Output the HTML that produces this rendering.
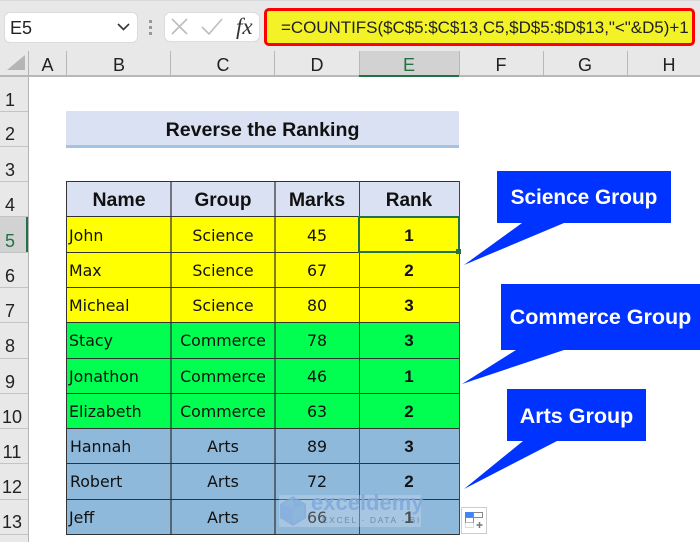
<!DOCTYPE html>
<html><head><meta charset="utf-8"><style>
html,body{margin:0;padding:0;background:#fff}
#p{position:relative;width:700px;height:542px;overflow:hidden;background:#fff;font-family:"DejaVu Sans","Liberation Sans",sans-serif;color:#111}
.a{position:absolute}
.t{position:absolute;white-space:nowrap;text-align:center;line-height:20px}
.h{font-size:18px;color:#222;font-family:"Liberation Sans",sans-serif}
.r{font-size:18px;color:#222;font-family:"Liberation Sans",sans-serif;left:0;width:24px}
.c{font-family:"DejaVu Sans",sans-serif;font-size:15.8px;color:#111}
.k{font-family:"Liberation Sans",sans-serif;font-weight:bold;font-size:17px;color:#111}
.hd{font-family:"Liberation Sans",sans-serif;font-weight:bold;font-size:19px;color:#111}
.co{font-family:"Liberation Sans",sans-serif;font-weight:bold;font-size:21.5px;color:#fff}
</style></head><body><div id="p">
<div class="a" style="left:0;top:0;width:700px;height:77px;background:#e8e8e8"></div>
<div class="a" style="left:0;top:0;width:700px;height:1px;background:#d8d8d8"></div>
<div class="a" style="left:0;top:77px;width:28px;height:465px;background:#e8e8e8"></div>
<div class="a" style="left:4px;top:12px;width:132px;height:29px;background:#fff;border:1px solid #dcdcdc;border-radius:6px"></div>
<div class="t" style="left:10px;top:18px;font-family:'Liberation Sans',sans-serif;font-size:18px;color:#222">E5</div>
<svg class="a" style="left:0;top:0" width="270" height="77">
<path d="M118 24l5.500 5.500 5.500-5.500" fill="none" stroke="#333" stroke-width="1.600"/>
<rect x="149" y="20" width="3" height="3" fill="#999"/><rect x="149" y="26" width="3" height="3" fill="#999"/><rect x="149" y="32" width="3" height="3" fill="#999"/>
<rect x="164.500" y="12.500" width="95" height="29" rx="6" fill="#fff" stroke="#dcdcdc"/>
<path d="M172 19l15 15M187 19l-15 15" stroke="#bdbdbd" stroke-width="1.600" fill="none"/>
<path d="M202 27l7 7 13-15" stroke="#bdbdbd" stroke-width="1.600" fill="none"/>
<path d="M7 70L25 55V70Z" fill="#b5b5b5"/>
</svg>
<div class="t" style="left:236px;top:17px;font-family:'Liberation Serif',serif;font-style:italic;font-size:23px;color:#333">fx</div>
<div class="a" style="left:264px;top:8px;width:431px;height:38px;background:#f2f226;border:3px solid #f00;border-radius:5px;box-sizing:border-box"></div>
<div class="t" style="left:281px;top:18px;font-family:'Liberation Sans',sans-serif;font-size:17px;color:#222;letter-spacing:-.04px">=COUNTIFS($C$5:$C$13,C5,$D$5:$D$13,"&lt;"&amp;D5)+1</div>

<!-- column headers -->
<div class="a" style="left:0;top:75px;width:700px;height:2px;background:#b8b8b8"></div>
<div class="a" style="left:359px;top:51px;width:100px;height:24px;background:#d2d2d2"></div>
<div class="a" style="left:359px;top:75px;width:100px;height:2px;background:#217346"></div>
<div class="a" style="left:28px;top:51px;width:1px;height:491px;background:#b4b4b4"></div>
<div class="a" style="left:66px;top:51px;width:1px;height:24px;background:#b8b8b8"></div>
<div class="a" style="left:170px;top:51px;width:1px;height:24px;background:#b8b8b8"></div>
<div class="a" style="left:274px;top:51px;width:1px;height:24px;background:#b8b8b8"></div>
<div class="a" style="left:359px;top:51px;width:1px;height:24px;background:#b8b8b8"></div>
<div class="a" style="left:459px;top:51px;width:1px;height:24px;background:#b8b8b8"></div>
<div class="a" style="left:543px;top:51px;width:1px;height:24px;background:#b8b8b8"></div>
<div class="a" style="left:627px;top:51px;width:1px;height:24px;background:#b8b8b8"></div>
<div class="t h" style="left:28px;width:39px;top:55px">A</div>
<div class="t h" style="left:67px;width:104px;top:55px">B</div>
<div class="t h" style="left:171px;width:104px;top:55px">C</div>
<div class="t h" style="left:275px;width:84px;top:55px">D</div>
<div class="t h" style="left:359px;width:100px;top:55px;color:#217346">E</div>
<div class="t h" style="left:459px;width:84px;top:55px">F</div>
<div class="t h" style="left:543px;width:84px;top:55px">G</div>
<div class="t h" style="left:627px;width:84px;top:55px">H</div>

<!-- row headers -->
<div class="a" style="left:0;top:216px;width:28px;height:36px;background:#d2d2d2"></div>
<div class="a" style="left:26px;top:216px;width:2px;height:36px;background:#217346"></div>
<div class="a" style="left:0;top:111px;width:28px;height:1px;background:#c4c4c4"></div>
<div class="a" style="left:0;top:146px;width:28px;height:1px;background:#c4c4c4"></div>
<div class="a" style="left:0;top:181px;width:28px;height:1px;background:#c4c4c4"></div>
<div class="a" style="left:0;top:216px;width:28px;height:1px;background:#c4c4c4"></div>
<div class="a" style="left:0;top:252px;width:28px;height:1px;background:#c4c4c4"></div>
<div class="a" style="left:0;top:287px;width:28px;height:1px;background:#c4c4c4"></div>
<div class="a" style="left:0;top:322px;width:28px;height:1px;background:#c4c4c4"></div>
<div class="a" style="left:0;top:358px;width:28px;height:1px;background:#c4c4c4"></div>
<div class="a" style="left:0;top:393px;width:28px;height:1px;background:#c4c4c4"></div>
<div class="a" style="left:0;top:428px;width:28px;height:1px;background:#c4c4c4"></div>
<div class="a" style="left:0;top:463px;width:28px;height:1px;background:#c4c4c4"></div>
<div class="a" style="left:0;top:499px;width:28px;height:1px;background:#c4c4c4"></div>
<div class="a" style="left:0;top:534px;width:28px;height:1px;background:#c4c4c4"></div>
<div class="t r" style="top:90px;left:-2px">1</div>
<div class="t r" style="top:124px;left:-2px">2</div>
<div class="t r" style="top:160px;left:-2px">3</div>
<div class="t r" style="top:195px;left:-2px">4</div>
<div class="t r" style="top:231px;left:-2px;color:#217346">5</div>
<div class="t r" style="top:266px;left:-2px">6</div>
<div class="t r" style="top:301px;left:-2px">7</div>
<div class="t r" style="top:336px;left:-2px">8</div>
<div class="t r" style="top:372px;left:-2px">9</div>
<div class="t r" style="top:407px">10</div>
<div class="t r" style="top:442px">11</div>
<div class="t r" style="top:477px">12</div>
<div class="t r" style="top:512px">13</div>

<!-- title -->
<div class="a" style="left:66px;top:111px;width:393px;height:34px;background:#d9e1f2"></div>
<div class="a" style="left:66px;top:145px;width:393px;height:3px;background:#a4c3e2"></div>
<div class="t hd" style="left:66px;width:393px;top:120px;font-size:19.600px">Reverse the Ranking</div>

<!-- table fills -->
<div class="a" style="left:67px;top:182px;width:392px;height:35px;background:#d9e1f2"></div>
<div class="a" style="left:67px;top:217px;width:392px;height:105px;background:#ff0"></div>
<div class="a" style="left:67px;top:322px;width:393px;height:106px;background:#00ff50"></div>
<div class="a" style="left:67px;top:428px;width:392px;height:106px;background:#8fb9da"></div>
<!-- horizontal lines -->
<div class="a" style="left:66px;top:181px;width:394px;height:1px;background:#333"></div>
<div class="a" style="left:66px;top:216px;width:394px;height:1px;background:#333"></div>
<div class="a" style="left:66px;top:252px;width:394px;height:1px;background:#333"></div>
<div class="a" style="left:66px;top:287px;width:394px;height:1px;background:#333"></div>
<div class="a" style="left:66px;top:322px;width:394px;height:1px;background:#333"></div>
<div class="a" style="left:66px;top:358px;width:394px;height:1px;background:#333"></div>
<div class="a" style="left:66px;top:393px;width:394px;height:1px;background:#333"></div>
<div class="a" style="left:66px;top:428px;width:394px;height:1px;background:#333"></div>
<div class="a" style="left:66px;top:463px;width:394px;height:1px;background:#333"></div>
<div class="a" style="left:66px;top:499px;width:394px;height:1px;background:#333"></div>
<div class="a" style="left:66px;top:534px;width:394px;height:1px;background:#333"></div>
<!-- vertical lines -->
<div class="a" style="left:66px;top:181px;width:1px;height:354px;background:#333"></div>
<div class="a" style="left:170px;top:181px;width:2px;height:354px;background:rgba(50,50,50,.62)"></div>
<div class="a" style="left:274px;top:181px;width:2px;height:354px;background:rgba(50,50,50,.62)"></div>
<div class="a" style="left:359px;top:181px;width:1px;height:354px;background:#444"></div>
<div class="a" style="left:459px;top:181px;width:1px;height:354px;background:#444"></div>
<!-- headers -->
<div class="t hd" style="left:67px;width:104px;top:190px;font-size:19.500px">Name</div>
<div class="t hd" style="left:171px;width:104px;top:191px">Group</div>
<div class="t hd" style="left:275px;width:84px;top:190px;font-size:19.500px">Marks</div>
<div class="t hd" style="left:359px;width:100px;top:191px">Rank</div>
<!-- names -->
<div class="t c" style="left:69px;top:226px">John</div>
<div class="t c" style="left:69px;top:261px">Max</div>
<div class="t c" style="left:69px;top:296px">Micheal</div>
<div class="t c" style="left:69px;top:331px">Stacy</div>
<div class="t c" style="left:69px;top:367px">Jonathon</div>
<div class="t c" style="left:69px;top:402px">Elizabeth</div>
<div class="t c" style="left:70px;top:437px">Hannah</div>
<div class="t c" style="left:70px;top:472px">Robert</div>
<div class="t c" style="left:69px;top:508px">Jeff</div>
<!-- groups -->
<div class="t c" style="left:171px;width:104px;top:226px">Science</div>
<div class="t c" style="left:171px;width:104px;top:261px">Science</div>
<div class="t c" style="left:171px;width:104px;top:296px">Science</div>
<div class="t c" style="left:171px;width:104px;top:331px">Commerce</div>
<div class="t c" style="left:171px;width:104px;top:367px">Commerce</div>
<div class="t c" style="left:171px;width:104px;top:402px">Commerce</div>
<div class="t c" style="left:171px;width:104px;top:437px">Arts</div>
<div class="t c" style="left:171px;width:104px;top:472px">Arts</div>
<div class="t c" style="left:171px;width:104px;top:508px">Arts</div>
<!-- marks -->
<div class="t c" style="left:275px;width:84px;top:226px">45</div>
<div class="t c" style="left:275px;width:84px;top:261px">67</div>
<div class="t c" style="left:275px;width:84px;top:296px">80</div>
<div class="t c" style="left:275px;width:84px;top:331px">78</div>
<div class="t c" style="left:275px;width:84px;top:367px">46</div>
<div class="t c" style="left:275px;width:84px;top:402px">63</div>
<div class="t c" style="left:275px;width:84px;top:437px">89</div>
<div class="t c" style="left:275px;width:84px;top:472px">72</div>
<div class="t c" style="left:275px;width:84px;top:508px">66</div>
<!-- ranks -->
<div class="t k" style="left:359px;width:100px;top:226px">1</div>
<div class="t k" style="left:359px;width:100px;top:261px">2</div>
<div class="t k" style="left:359px;width:100px;top:296px">3</div>
<div class="t k" style="left:359px;width:100px;top:331px">3</div>
<div class="t k" style="left:359px;width:100px;top:367px">1</div>
<div class="t k" style="left:359px;width:100px;top:402px">2</div>
<div class="t k" style="left:359px;width:100px;top:437px">3</div>
<div class="t k" style="left:359px;width:100px;top:472px">2</div>
<div class="t k" style="left:359px;width:100px;top:508px">1</div>
<!-- selection -->
<div class="a" style="left:358px;top:216px;width:102px;height:37px;border:2px solid #217346;box-sizing:border-box"></div>
<div class="a" style="left:456px;top:249px;width:5px;height:5px;background:#217346"></div>

<!-- watermark -->
<div class="a" style="left:279px;top:495px;width:142px;height:32px;background:rgba(225,235,245,.28)"></div>
<svg class="a" style="left:279px;top:495px" width="40" height="32"><path d="M14 1L27 9V23L14 31L1 23V9Z" fill="#7fa8dc" opacity=".7"/><path d="M14 3L14 15L3 9ZM14 15L25 9V22L14 28Z" fill="#8fb9da" opacity=".55"/></svg>
<div class="t" style="left:311px;top:493px;font-family:'Liberation Sans',sans-serif;font-weight:bold;font-size:22px;color:#7fa8dc;opacity:.85">exceldemy</div>
<div class="t" style="left:322px;top:510px;font-family:'Liberation Sans',sans-serif;font-size:8.500px;letter-spacing:1.600px;color:#5f7f9f;opacity:.8">EXCEL · DATA · BI</div>

<!-- quick analysis icon -->
<div class="a" style="left:461px;top:507px;width:26px;height:27px;background:#fff;border:1.500px solid #ccc;box-sizing:border-box"></div>
<svg class="a" style="left:461px;top:507px" width="26" height="27">
<rect x="4.500" y="5.500" width="8" height="5" fill="#3e85f5" stroke="#3e85f5"/>
<rect x="12.500" y="5.500" width="9" height="5" fill="#fff" stroke="#888"/>
<rect x="4.500" y="10.500" width="8" height="5" fill="#fff" stroke="#888"/>
<rect x="4.500" y="15.500" width="8" height="5" fill="#fff" stroke="#bbb" stroke-dasharray="1 1"/>
<path d="M15.500 18h6M18.500 15v6" stroke="#777" stroke-width="1.500"/>
</svg>

<!-- callouts -->
<svg class="a" style="left:0;top:0" width="700" height="542">
<path d="M497 171H671V223H564L464 265L522 223H497Z" fill="#0033ff"/>
<path d="M501 284H700V350H564L462 384L516 350H501Z" fill="#0033ff"/>
<path d="M507 389H646V441H557L464 489L523 441H507Z" fill="#0033ff"/>
</svg>
<div class="t co" style="left:497px;width:174px;top:188px;font-size:20.800px">Science Group</div>
<div class="t co" style="left:501px;width:199px;top:307px">Commerce Group</div>
<div class="t co" style="left:507px;width:139px;top:406px">Arts Group</div>
</div></body></html>
